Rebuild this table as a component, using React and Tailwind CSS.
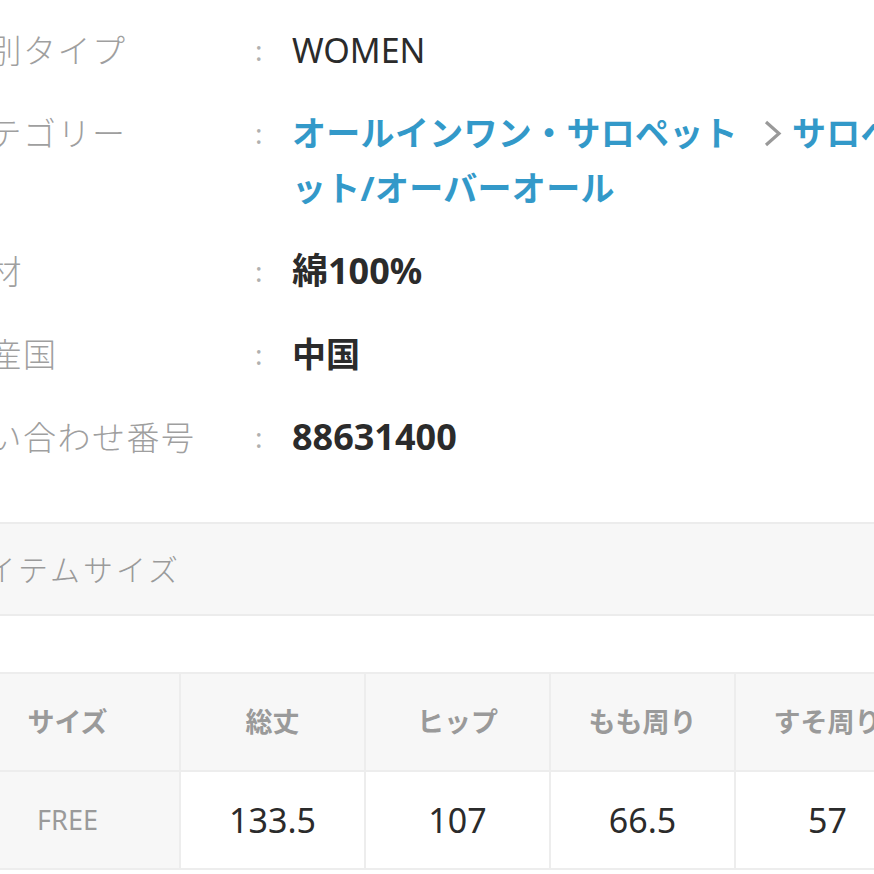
import React from "react";

const Row = ({ label, children }) => (
  <div className="flex">
    <div className="w-[300px] shrink-0 text-[33px] leading-[55px] tracking-[1.5px] text-[#9f9f9f] font-light whitespace-nowrap">
      {label}
    </div>
    <div className="w-[38px] shrink-0 text-[28px] leading-[55px] text-[#b0b0b0] pl-[1px]">:</div>
    <div className="flex-1 text-[34px] leading-[55px] text-[#2b2b2b] whitespace-nowrap">{children}</div>
  </div>
);

export default function App() {
  const heads = ["サイズ", "総丈", "ヒップ", "もも周り", "すそ周り"];
  const vals = ["133.5", "107", "66.5", "57"];
  return (
    <div
      className="w-[874px] h-[874px] overflow-hidden bg-white"
      style={{ fontFamily: '"Noto Sans", "Noto Sans CJK JP", sans-serif' }}
    >
      <div className="ml-[-46px] w-[1000px]">
        <div className="pt-[23px] flex flex-col gap-[28px]">
          <Row label="性別タイプ">WOMEN</Row>
          <Row label="カテゴリー">
            <div className="font-bold text-[#3399c9] tracking-[0.3px]">
              <div className="flex items-center">
                <span>オールインワン・サロペット</span>
                <svg width="19" height="29" viewBox="0 0 19 29" className="ml-[25px] mr-[10px]">
                  <polyline points="3,3 16,14.5 3,26" fill="none" stroke="#999999" strokeWidth="3.2" />
                </svg>
                <span>サロペ</span>
              </div>
              <div>ット/オーバーオール</div>
            </div>
          </Row>
          <Row label="素材">
            <span className="font-bold text-[36px] leading-none">綿100%</span>
          </Row>
          <Row label="原産国">
            <span className="font-bold">中国</span>
          </Row>
          <Row label="問い合わせ番号">
            <span className="font-bold text-[36px] leading-none">88631400</span>
          </Row>
        </div>

        <div className="mt-[57px] h-[94px] bg-[#f7f7f7] border-y-2 border-[#ececec] flex items-center text-[30px] text-[#9a9a9a] tracking-[3px] font-light">
          アイテムサイズ
        </div>

        <table className="mt-[56px] border-collapse table-fixed">
          <tbody>
            <tr className="h-[98px]">
              {heads.map((h, i) => (
                <td
                  key={h}
                  className={`${i === 0 ? "w-[225px]" : "w-[185px]"} bg-[#f7f7f7] border-2 border-[#ededed] text-center align-middle text-[27px] font-bold text-[#9a9a9a] whitespace-nowrap`}
                >
                  {h}
                </td>
              ))}
            </tr>
            <tr className="h-[98px]">
              <td className="bg-[#f7f7f7] border-2 border-[#ededed] text-center align-middle text-[27px] text-[#9a9a9a]">
                FREE
              </td>
              {vals.map((v) => (
                <td
                  key={v}
                  className="bg-white border-2 border-[#ededed] text-center align-middle text-[34px] text-[#2b2b2b]"
                >
                  {v}
                </td>
              ))}
            </tr>
          </tbody>
        </table>
      </div>
    </div>
  );
}
